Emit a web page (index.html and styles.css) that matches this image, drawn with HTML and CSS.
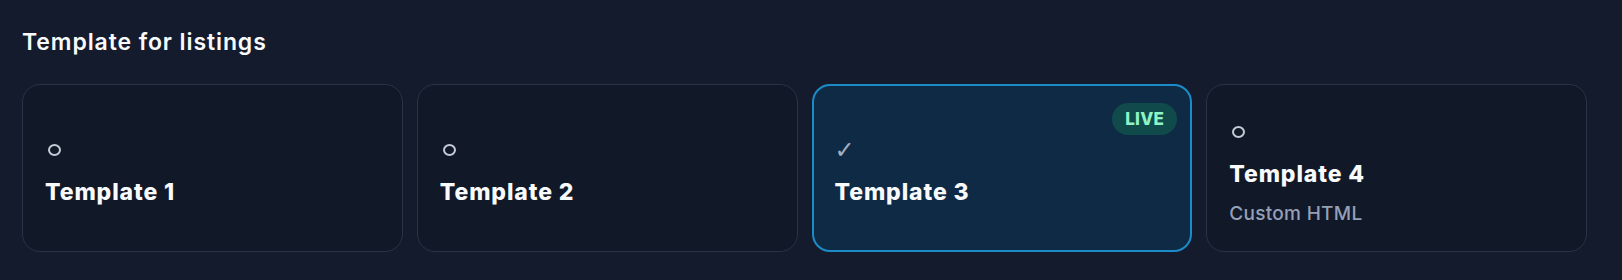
FILE: index.html
```html
<!DOCTYPE html>
<html>
<head>
<meta charset="utf-8">
<link rel="stylesheet" href="styles.css">
</head>
<body>
<div class="panel">
	<div class="panel_title">Template for listings</div>
	<div class="templates">
		<div class="template">
			<div class="template_mark"><span class="ring"></span></div>
			<div class="template_name">Template 1</div>
		</div>
		<div class="template">
			<div class="template_mark"><span class="ring"></span></div>
			<div class="template_name">Template 2</div>
		</div>
		<div class="template selected">
			<span class="badge">LIVE</span>
			<div class="template_mark">✓</div>
			<div class="template_name">Template 3</div>
		</div>
		<div class="template">
			<div class="template_mark"><span class="ring"></span></div>
			<div class="template_name">Template 4</div>
			<div class="template_note">Custom HTML</div>
		</div>
	</div>
</div>
</body>
</html>
```

FILE: styles.css
```css
body
{
	margin: 0;
	background: #141b2c;
	font-family: Inter, "Liberation Sans", sans-serif;
	color: #f8fafc;
}

.panel
{
	padding: 29px 35px 27px 22px;
}

.panel_title
{
	font-size: 23px;
	line-height: 26px;
	font-weight: 600;
	letter-spacing: 0.9px;
	margin-bottom: 29px;
}

.templates
{
	display: grid;
	grid-template-columns: repeat(4, 1fr);
	gap: 14px;
}

.template
{
	position: relative;
	height: 168px;
	box-sizing: border-box;
	padding: 10px 22px 0;
	border: 1px solid #2a3345;
	border-radius: 18px;
	background: #111828;
	display: flex;
	flex-direction: column;
	justify-content: center;
}

.template.selected
{
	border: 2px solid #1b8cc8;
	background: #0f2a45;
	padding: 10px 21px 0;
}

.template_mark
{
	height: 20px;
	display: flex;
	align-items: center;
	margin-bottom: 18px;
	font-family: "DejaVu Sans", sans-serif;
	font-size: 24px;
	color: #a3afc2;
}

.ring
{
	display: inline-block;
	width: 9px;
	height: 8px;
	margin-left: 3px;
	border: 2px solid #c3cad6;
	border-radius: 50%;
}

.template_name
{
	font-size: 23px;
	line-height: 28px;
	font-weight: 800;
	letter-spacing: 0.9px;
}

.template_note
{
	font-size: 19px;
	line-height: 22px;
	font-weight: 500;
	letter-spacing: 0.3px;
	color: #94a0b6;
	margin-top: 15px;
}

.badge
{
	position: absolute;
	top: 17px;
	right: 13px;
	height: 32px;
	padding: 0 13px;
	border-radius: 16px;
	background: #114a4b;
	color: #8ff3c6;
	font-size: 17px;
	line-height: 32px;
	font-weight: 800;
	letter-spacing: 0.3px;
}
```
